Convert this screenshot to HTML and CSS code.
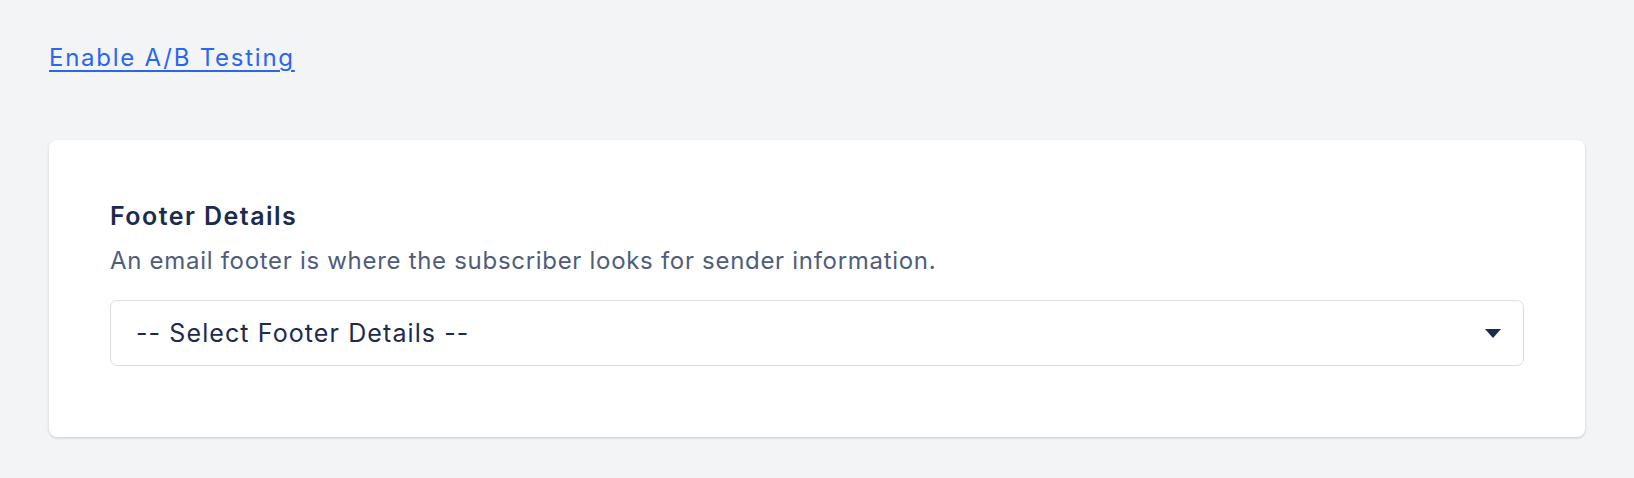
FILE: index.html
```html
<!DOCTYPE html>
<html lang="en">
<head>
<meta charset="utf-8">
<title>Footer Details</title>
<link rel="stylesheet" href="styles.css">
</head>
<body>
<main class="page">
  <div class="ab-row">
    <a class="ab-link" href="#">Enable A/B Testing</a>
  </div>
  <section class="card">
    <h2 class="card-title">Footer Details</h2>
    <p class="card-desc">An email footer is where the subscriber looks for sender information.</p>
    <div class="select">
      <span class="select-value">-- Select Footer Details --</span>
      <svg class="select-caret" width="16" height="9" viewBox="0 0 16 9" aria-hidden="true"><path d="M0 0H16L8 9Z" fill="#1c2b4d"/></svg>
    </div>
  </section>
</main>
</body>
</html>
```
FILE: styles.css
```css
html, body {
  margin: 0;
  padding: 0;
  background: #f3f4f6;
}
body {
  font-family: Inter, "Noto Sans", "Liberation Sans", sans-serif;
  color: #1c2b4d;
}
.page {
  padding: 42px 49px 40px 49px;
  display: flex;
  flex-direction: column;
  gap: 66px;
}
.ab-row {
  line-height: 32px;
  font-size: 24px;
}
.ab-link {
  color: #2a66f0;
  letter-spacing: 1.75px;
  text-decoration: underline;
  text-decoration-thickness: 2px;
  text-underline-offset: 4px;
}
.card {
  background: #ffffff;
  border-radius: 8px;
  box-shadow: 0 1px 3px rgba(30, 41, 70, 0.14), 0 1px 2px rgba(30, 41, 70, 0.08);
  padding: 60px 61px 71px 61px;
  display: flex;
  flex-direction: column;
}
.card-title {
  margin: 0;
  font-size: 25px;
  line-height: 32px;
  font-weight: 600;
  letter-spacing: 1.45px;
  color: #1c2b4d;
}
.card-desc {
  margin: 13px 0 0 0;
  font-size: 24px;
  line-height: 32px;
  letter-spacing: 0.7px;
  color: #4f5d7a;
}
.select {
  margin-top: 23px;
  height: 66px;
  box-sizing: border-box;
  border: 1.5px solid #dcdee3;
  border-radius: 7px;
  display: flex;
  align-items: center;
  justify-content: space-between;
  padding: 0 22px 0 25px;
}
.select-value {
  font-size: 25px;
  line-height: 32px;
  letter-spacing: 1.1px;
  color: #1c2b4d;
}
.select-caret {
  display: block;
}
```
